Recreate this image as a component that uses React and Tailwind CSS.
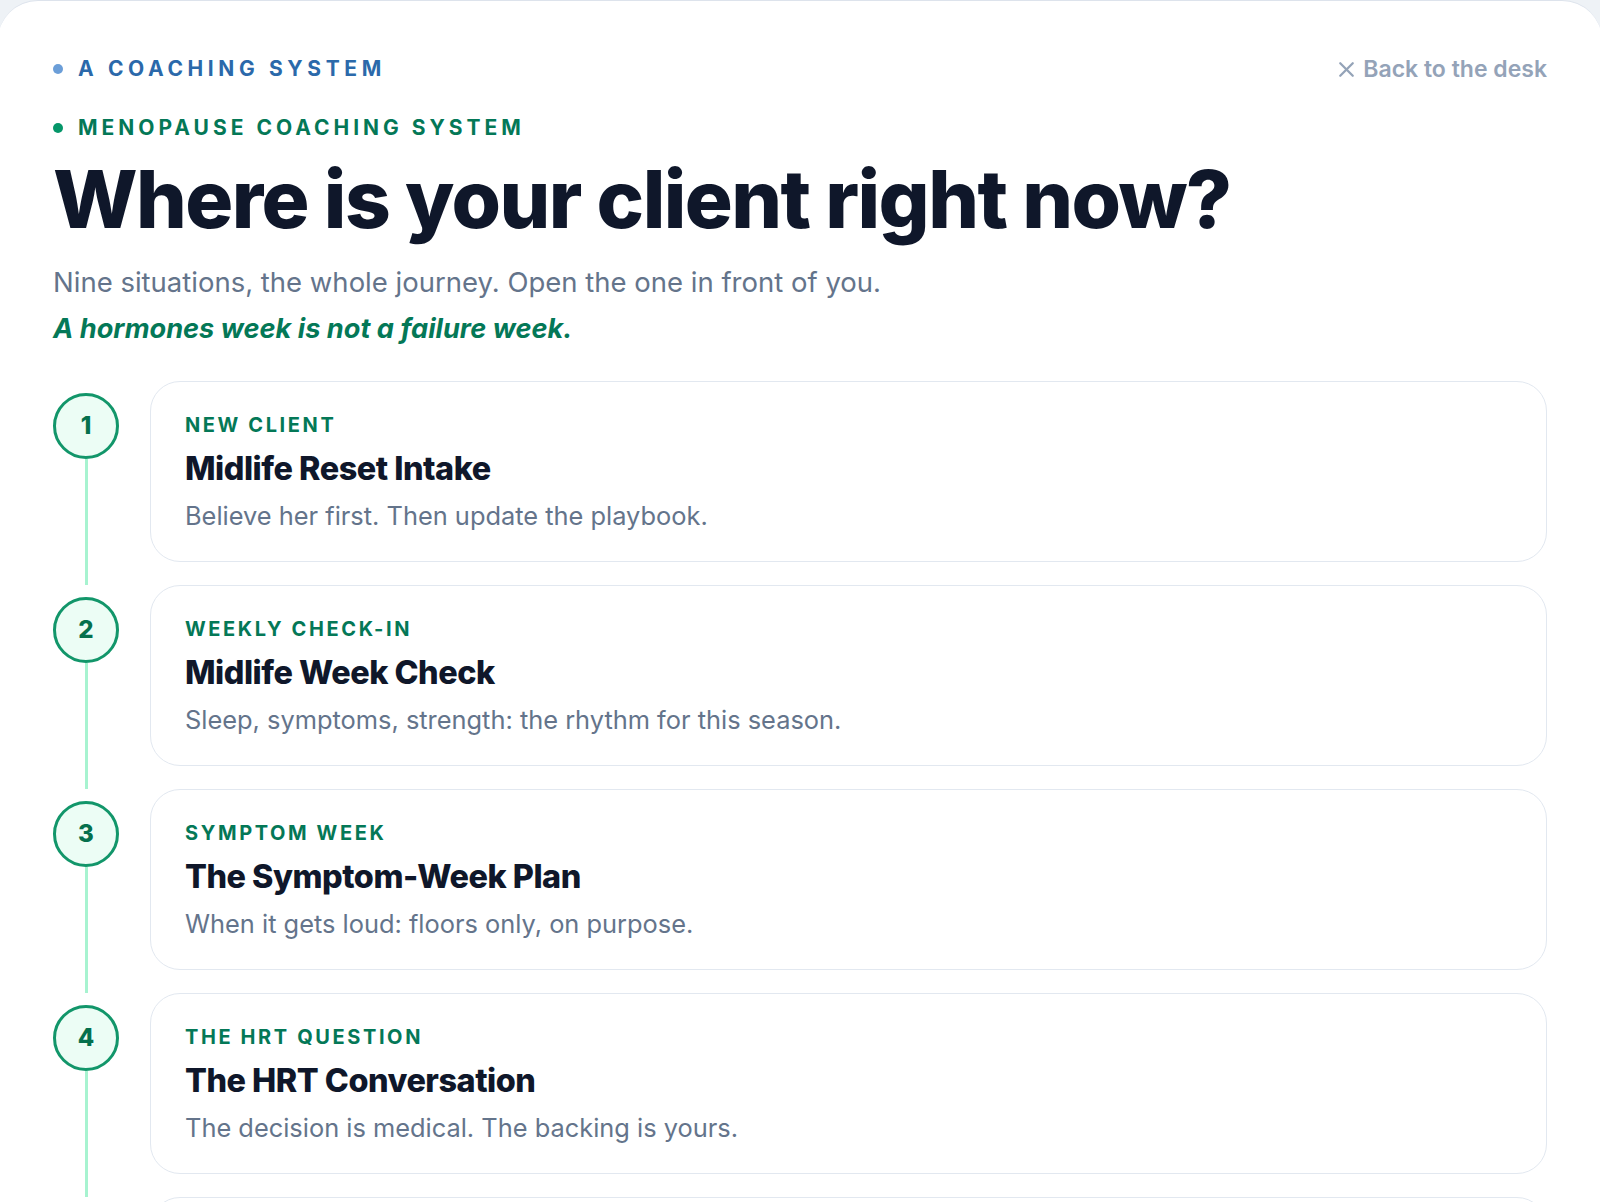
import React from "react";
import { X } from "lucide-react";

const situations = [
  { n: 1, tag: "NEW CLIENT", title: "Midlife Reset Intake", desc: "Believe her first. Then update the playbook." },
  { n: 2, tag: "WEEKLY CHECK-IN", title: "Midlife Week Check", desc: "Sleep, symptoms, strength: the rhythm for this season." },
  { n: 3, tag: "SYMPTOM WEEK", title: "The Symptom-Week Plan", desc: "When it gets loud: floors only, on purpose." },
  { n: 4, tag: "THE HRT QUESTION", title: "The HRT Conversation", desc: "The decision is medical. The backing is yours." },
  { n: 5, tag: "STRENGTH", title: "Strength for This Season", desc: "Lift heavy enough to matter." },
];

const Row = ({ item }) => (
  <div className="flex gap-[31px]">
    <div className="flex w-[66px] shrink-0 flex-col items-center pt-[12px]">
      <div className="flex h-[66px] w-[66px] items-center justify-center rounded-full border-[3px] border-[#12966a] bg-[#ecfdf5] text-[24px] font-extrabold text-[#05704d]">
        {item.n}
      </div>
      <div className="w-[3px] flex-1 bg-[#a7f3d0]" />
    </div>
    <div className="flex-1 pb-[23px]">
      <div className="rounded-[30px] border border-[#e2e8f0] bg-white px-[34px] pb-[28px] pt-[30px]">
        <div className="text-[20px] font-bold leading-[26px] tracking-[0.13em] text-[#047857]">
          {item.tag}
        </div>
        <div className="mt-[12px] text-[32.4px] font-extrabold leading-[38px] tracking-[-0.015em] text-[#0f172a]">
          {item.title}
        </div>
        <div className="mt-[11px] text-[25.4px] leading-[34px] text-[#64748b]">
          {item.desc}
        </div>
      </div>
    </div>
  </div>
);

export default function App() {
  return (
    <div className="h-screen overflow-hidden bg-[#eef2f6] font-['Inter',sans-serif]">
      <div className="-mx-[2px] min-h-full rounded-t-[40px] border-t border-[#dde3ec] bg-white px-[55px] pt-[55px]">
        <div className="flex items-center justify-between">
          <div className="flex items-center gap-[15px] text-[21px] font-bold leading-[26px] tracking-[0.22em] text-[#2b69aa]">
            <span className="h-[10px] w-[10px] rounded-full bg-[#6b9ed8]" />
            A COACHING SYSTEM
          </div>
          <div className="flex items-center gap-[4px] text-[23px] font-semibold leading-[26px] text-[#94a3b8]">
            <X size={25} strokeWidth={2.2} />
            Back to the desk
          </div>
        </div>

        <div className="mt-[33px] flex items-center gap-[15px] text-[21px] font-bold leading-[26px] tracking-[0.19em] text-[#047857]">
          <span className="h-[10px] w-[10px] rounded-full bg-[#059669]" />
          MENOPAUSE COACHING SYSTEM
        </div>

        <h1 className="mt-[14px] text-[80px] font-extrabold leading-[88px] tracking-[-0.02em] text-[#0f172a]">
          Where is your client right now?
        </h1>

        <p className="mt-[22px] text-[27.5px] leading-[34px] text-[#64748b]">
          Nine situations, the whole journey. Open the one in front of you.
        </p>
        <p className="mt-[13px] text-[27.2px] font-bold italic leading-[34px] text-[#047857]">
          A hormones week is not a failure week.
        </p>

        <div className="mt-[35px]">
          {situations.map((s) => (
            <Row key={s.n} item={s} />
          ))}
        </div>
      </div>
    </div>
  );
}
